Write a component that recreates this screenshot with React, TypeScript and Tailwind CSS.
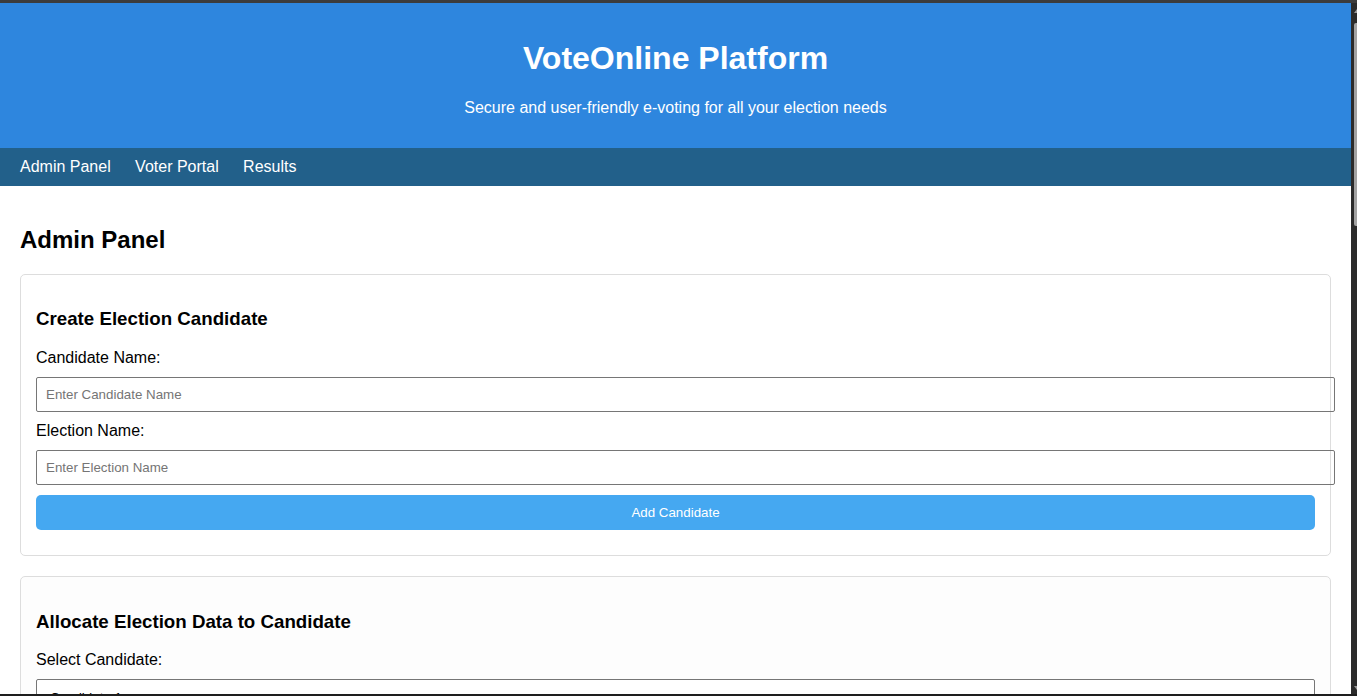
import { useState } from 'react'

const candidates = ['Candidate 1', 'Candidate 2', 'Candidate 3']

function Scrollbar() {
    return (
        <div className="relative w-[6px] bg-[#2b2b2b]">
            <div className="absolute left-[3px] top-[6px] h-0 w-0 border-x-[3px] border-b-[4px] border-x-transparent border-b-[#9a9a9a]" />
            <div className="absolute left-[3px] top-[20px] h-[203px] w-[3px] rounded-l-[2px] bg-[#a3a3a3]" />
            <div className="absolute bottom-[4px] left-[3px] h-0 w-0 border-x-[3px] border-t-[4px] border-x-transparent border-t-[#9a9a9a]" />
        </div>
    )
}

export default function App() {
    const [candidateName, setCandidateName] = useState('')
    const [electionName, setElectionName] = useState('')
    const [selected, setSelected] = useState(candidates[0])

    return (
        <div className="flex h-[696px] w-[1357px] flex-col overflow-hidden bg-[#2b2b2b] font-['Liberation_Sans',Arial,sans-serif] text-black">
            <div className="h-[3px] shrink-0 bg-[#3c3c3c]" />

            <div className="flex min-h-0 flex-1">
                <div className="w-[1351px] overflow-hidden bg-white">
                    {/* Header */}
                    <header className="bg-[#2e86de] py-4 text-center text-white">
                        <h1 className="mt-[21px] mb-[22px] text-[32px] leading-[37px] font-bold">VoteOnline Platform</h1>
                        <p className="mt-0 mb-[15px] text-base leading-[18px]">Secure and user-friendly e-voting for all your election needs</p>
                    </header>

                    {/* Nav */}
                    <nav className="flex gap-[24.4px] bg-[#22608a] px-5 py-[10px] text-base leading-[18px] text-white">
                        <a href="#">Admin Panel</a>
                        <a href="#">Voter Portal</a>
                        <a href="#">Results</a>
                    </nav>

                    <main className="p-5">
                        <h2 className="my-[20px] text-[24px] leading-[27.6px] font-bold">Admin Panel</h2>

                        {/* Create candidate */}
                        <section className="mb-5 rounded-[5px] border border-[#dddddd] bg-white p-[15px]">
                            <h3 className="my-[18.72px] text-[18.72px] leading-[21.5px] font-bold">Create Election Candidate</h3>
                            <label className="mb-[10px] block text-base leading-[18px]">Candidate Name:</label>
                            <input
                                type="text"
                                placeholder="Enter Candidate Name"
                                value={candidateName}
                                onChange={(e) => setCandidateName(e.target.value)}
                                className="mb-[10px] box-content block w-full rounded-[2px] border border-[#767676] px-[9px] py-[9px] text-[13.33px] leading-[15.33px] placeholder:text-[#757575]"
                            />
                            <label className="mb-[10px] block text-base leading-[18px]">Election Name:</label>
                            <input
                                type="text"
                                placeholder="Enter Election Name"
                                value={electionName}
                                onChange={(e) => setElectionName(e.target.value)}
                                className="mb-[10px] box-content block w-full rounded-[2px] border border-[#767676] px-[9px] py-[9px] text-[13.33px] leading-[15.33px] placeholder:text-[#757575]"
                            />
                            <button className="mb-[10px] block h-[35px] w-full rounded-[5px] bg-[#45a8f1] text-[13.33px] text-white">
                                Add Candidate
                            </button>
                        </section>

                        {/* Allocate */}
                        <section className="mb-5 rounded-[5px] border border-[#dddddd] bg-[#fdfdfd] p-[15px]">
                            <h3 className="my-[18.72px] text-[18.72px] leading-[21.5px] font-bold">Allocate Election Data to Candidate</h3>
                            <label className="mb-[10px] block text-base leading-[18px]">Select Candidate:</label>
                            <select
                                value={selected}
                                onChange={(e) => setSelected(e.target.value)}
                                className="block w-full rounded-[2px] border border-[#767676] bg-white px-[9px] py-[9px] text-[13.33px] leading-[15.33px]"
                            >
                                {candidates.map((c) => (
                                    <option key={c}>{c}</option>
                                ))}
                            </select>
                        </section>
                    </main>
                </div>
                <Scrollbar />
            </div>

            <div className="h-[2px] shrink-0 bg-[#1e1e1e]" />
        </div>
    )
}
